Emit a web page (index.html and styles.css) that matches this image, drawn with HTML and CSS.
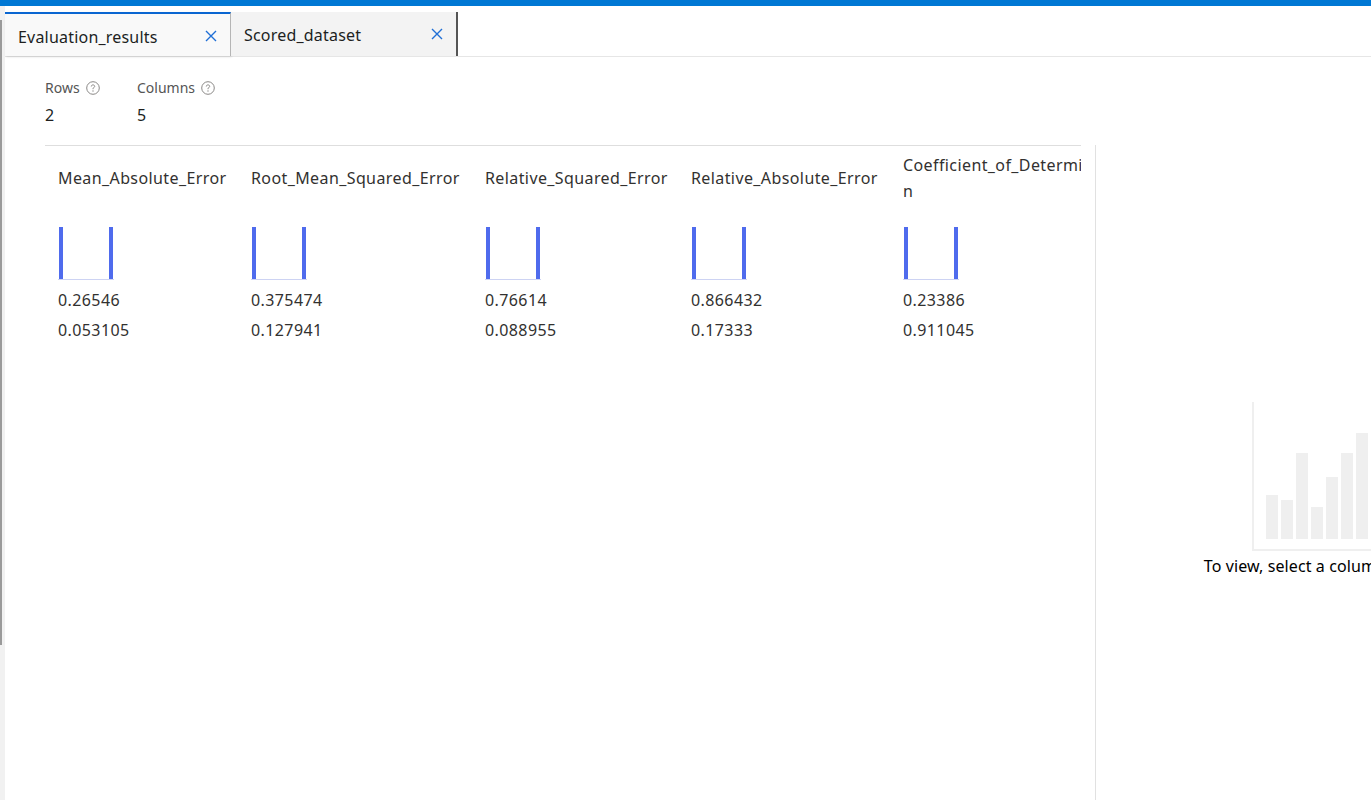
FILE: index.html
```html
<!DOCTYPE html>
<html lang="en">
<head>
<meta charset="utf-8">
<title>Evaluation results</title>
<link rel="stylesheet" href="styles.css">
</head>
<body>
<div class="topbar"></div>
<div class="app">
  <div class="edge"><div class="edge-dark"></div></div>
  <div class="main">
    <div class="tabs">
      <div class="tab active">
        <span class="tab-label">Evaluation_results</span>
        <svg class="tab-close" width="12" height="12" viewBox="0 0 12 12"><path d="M1 1L11 11M11 1L1 11" stroke="#1f6fd6" stroke-width="1.4" fill="none"/></svg>
      </div>
      <div class="tab">
        <span class="tab-label">Scored_dataset</span>
        <svg class="tab-close" width="12" height="12" viewBox="0 0 12 12"><path d="M1 1L11 11M11 1L1 11" stroke="#1f6fd6" stroke-width="1.4" fill="none"/></svg>
      </div>
    </div>
    <div class="content">
      <div class="stats">
        <div class="stat">
          <div class="stat-label">Rows <svg class="help" width="14" height="14" viewBox="0 0 14 14"><circle cx="7" cy="7" r="6.3" stroke="#8a8886" stroke-width="1" fill="none"/><path d="M5.3 5.5C5.3 4.5 6 3.9 7 3.9C8 3.9 8.7 4.5 8.7 5.4C8.7 6.4 7.7 6.6 7.2 7.1C7 7.3 7 7.6 7 8.2" stroke="#8a8886" stroke-width="1" fill="none"/><circle cx="7" cy="10" r="0.65" fill="#8a8886"/></svg></div>
          <div class="stat-value">2</div>
        </div>
        <div class="stat">
          <div class="stat-label">Columns <svg class="help" width="14" height="14" viewBox="0 0 14 14"><circle cx="7" cy="7" r="6.3" stroke="#8a8886" stroke-width="1" fill="none"/><path d="M5.3 5.5C5.3 4.5 6 3.9 7 3.9C8 3.9 8.7 4.5 8.7 5.4C8.7 6.4 7.7 6.6 7.2 7.1C7 7.3 7 7.6 7 8.2" stroke="#8a8886" stroke-width="1" fill="none"/><circle cx="7" cy="10" r="0.65" fill="#8a8886"/></svg></div>
          <div class="stat-value">5</div>
        </div>
      </div>
      <div class="body">
        <div class="grid">
          <div class="col c1">
            <div class="col-head"><span>Mean_Absolute_Error</span></div>
            <div class="hist"><span class="bar"></span><span class="bar"></span></div>
            <div class="val">0.26546</div>
            <div class="val">0.053105</div>
          </div>
          <div class="col c2">
            <div class="col-head"><span>Root_Mean_Squared_Error</span></div>
            <div class="hist"><span class="bar"></span><span class="bar"></span></div>
            <div class="val">0.375474</div>
            <div class="val">0.127941</div>
          </div>
          <div class="col c3">
            <div class="col-head"><span>Relative_Squared_Error</span></div>
            <div class="hist"><span class="bar"></span><span class="bar"></span></div>
            <div class="val">0.76614</div>
            <div class="val">0.088955</div>
          </div>
          <div class="col c4">
            <div class="col-head"><span>Relative_Absolute_Error</span></div>
            <div class="hist"><span class="bar"></span><span class="bar"></span></div>
            <div class="val">0.866432</div>
            <div class="val">0.17333</div>
          </div>
          <div class="col c5">
            <div class="col-head"><span>Coefficient_of_Determi<br>n</span></div>
            <div class="hist"><span class="bar"></span><span class="bar"></span></div>
            <div class="val">0.23386</div>
            <div class="val">0.911045</div>
          </div>
        </div>
        <div class="side">
          <div class="placeholder">
            <div class="chart">
              <span class="pbar" style="height:44px"></span>
              <span class="pbar" style="height:39px"></span>
              <span class="pbar" style="height:86px"></span>
              <span class="pbar" style="height:32px"></span>
              <span class="pbar" style="height:62px"></span>
              <span class="pbar" style="height:86px"></span>
              <span class="pbar" style="height:106px"></span>
              <span class="pbar" style="height:70px"></span>
              <span class="pbar" style="height:50px"></span>
              <span class="pbar" style="height:90px"></span>
              <span class="pbar" style="height:60px"></span>
              <span class="pbar" style="height:40px"></span>
              <span class="pbar" style="height:30px"></span>
            </div>
            <div class="placeholder-text">To view, select a column to see its statistics.</div>
          </div>
        </div>
      </div>
    </div>
  </div>
</div>
</body>
</html>
```

FILE: styles.css
```css
html, body {
  margin: 0;
  padding: 0;
  height: 100%;
  overflow: hidden;
  background: #ffffff;
}
body {
  font-family: "Noto Sans", "Open Sans", sans-serif;
  color: #323130;
}
.topbar {
  height: 6px;
  background: #0078d4;
}
.app {
  display: flex;
  height: 794px;
}
.edge {
  width: 5px;
  flex-shrink: 0;
  background: #f1f1f1;
  display: flex;
  flex-direction: column;
}
.edge-dark {
  width: 2px;
  margin-top: 14px;
  height: 625px;
  background: #9a9a9a;
}
.main {
  flex: 1;
  min-width: 0;
  display: flex;
  flex-direction: column;
}
.tabs {
  display: flex;
  padding-top: 6px;
  border-bottom: 1px solid #e6e6e6;
}
.tab {
  width: 227px;
  height: 44px;
  box-sizing: border-box;
  display: flex;
  align-items: center;
  justify-content: space-between;
  padding: 0 13px 0 13px;
  background: #f3f3f3;
  border-right: 2px solid #555555;
  font-size: 16px;
  letter-spacing: 0.2px;
  color: #201f1e;
}
.tab.active {
  width: 226px;
  background: #f9f9f9;
  border-top: 2px solid #0a66d1;
  border-right: 1px solid #b5b5b5;
  box-shadow: 1px 1px 2px rgba(0,0,0,0.12);
  padding-top: 2px;
}
.tab-label {
  white-space: nowrap;
  padding-top: 2px;
}
.tab-close {
  flex-shrink: 0;
}
.content {
  flex: 1;
  display: flex;
  flex-direction: column;
  padding-left: 40px;
  min-height: 0;
}
.stats {
  display: flex;
  padding-top: 21px;
  padding-bottom: 19px;
}
.stat {
  width: 92px;
}
.stat-label {
  font-size: 14px;
  line-height: 20px;
  color: #555555;
  display: flex;
  align-items: center;
  gap: 6px;
}
.help {
  display: block;
}
.stat-value {
  margin-top: 6px;
  font-size: 16px;
  line-height: 22px;
  color: #201f1e;
}
.body {
  flex: 1;
  display: flex;
  min-height: 0;
}
.grid {
  width: 1036px;
  flex-shrink: 0;
  border-top: 1px solid #dedede;
  display: flex;
  align-items: flex-start;
  overflow: hidden;
}
.col {
  box-sizing: border-box;
  padding: 6px 0 0 13px;
  flex-shrink: 0;
}
.c1 { width: 193px; }
.c2 { width: 234px; }
.c3 { width: 206px; }
.c4 { width: 212px; }
.c5 { width: 191px; overflow: hidden; }
.col-head {
  height: 52px;
  display: flex;
  align-items: center;
  font-size: 16px;
  letter-spacing: 0.4px;
  line-height: 26px;
  color: #323130;
  white-space: nowrap;
}
.hist {
  margin-top: 24px;
  width: 56px;
  height: 52px;
  display: flex;
  justify-content: space-between;
  align-items: flex-end;
  padding: 0 1px;
  box-sizing: border-box;
  border-bottom: 1px solid #cdd3f3;
}
.bar {
  width: 4px;
  height: 52px;
  background: #4f6bed;
}
.val {
  font-size: 16px;
  letter-spacing: 0.4px;
  line-height: 30px;
  color: #323130;
}
.hist + .val {
  margin-top: 5px;
}
.side {
  margin-left: 14px;
  width: 546px;
  flex-shrink: 0;
  border-left: 1px solid #e1e1e1;
  display: flex;
  justify-content: center;
  padding-top: 257px;
  box-sizing: border-box;
}
.placeholder {
  display: flex;
  flex-direction: column;
  align-items: center;
}
.chart {
  width: 234px;
  height: 149px;
  box-sizing: border-box;
  border-left: 2px solid #efefef;
  border-bottom: 2px solid #efefef;
  display: flex;
  align-items: flex-end;
  gap: 3px;
  padding: 0 0 10px 12px;
}
.pbar {
  width: 12px;
  background: #efefef;
  flex-shrink: 0;
}
.placeholder-text {
  margin-top: 4px;
  font-size: 16px;
  letter-spacing: 0.1px;
  line-height: 22px;
  color: #000000;
  white-space: nowrap;
}
```
